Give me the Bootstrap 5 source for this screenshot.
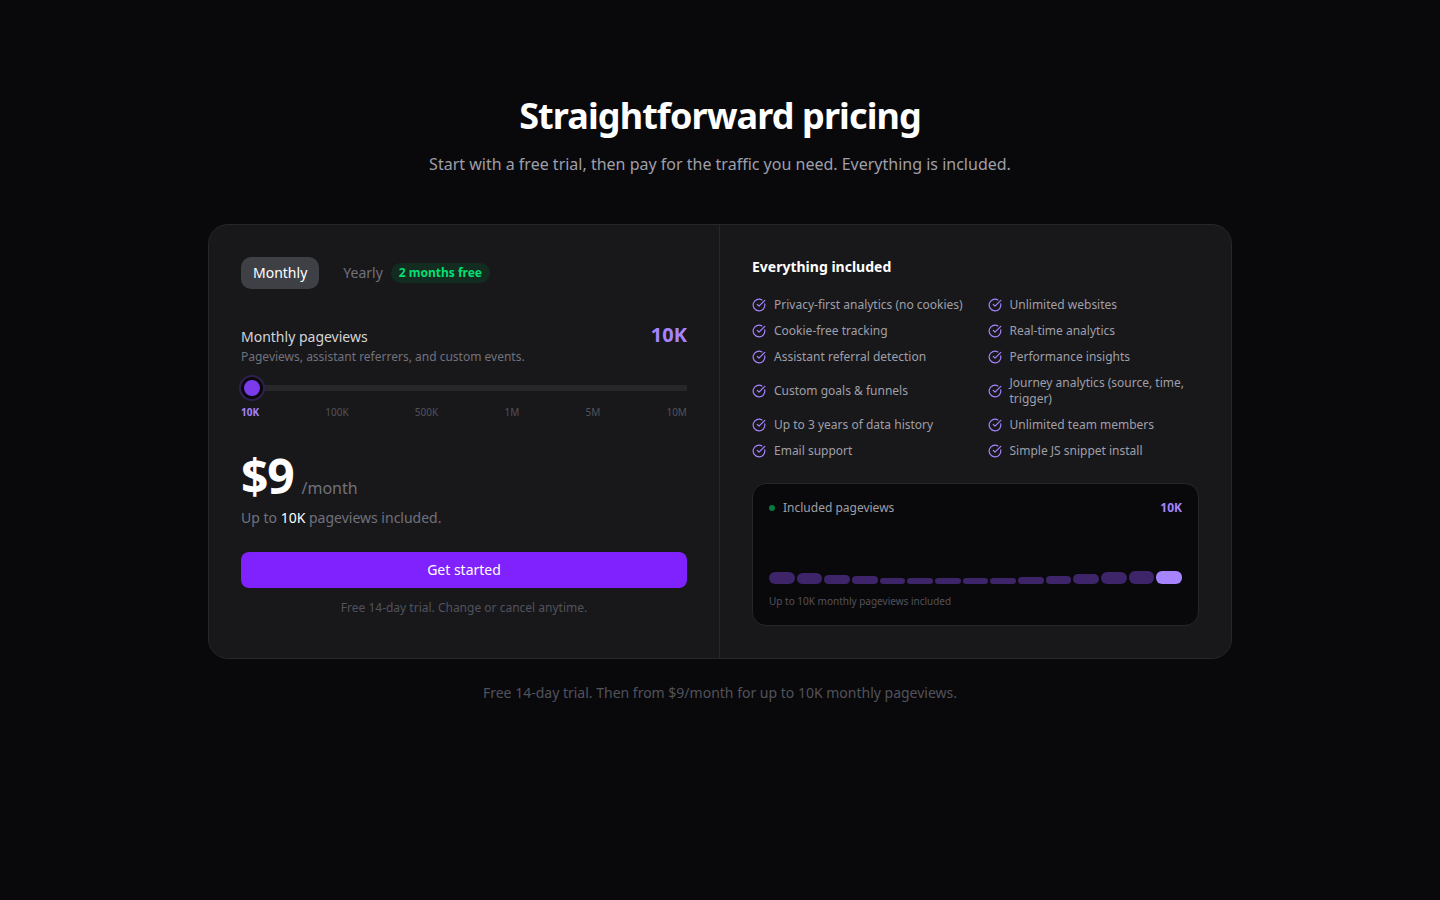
<!DOCTYPE html>
<html lang="en" data-bs-theme="dark">
<head>
<meta charset="utf-8">
<meta name="viewport" content="width=device-width, initial-scale=1">
<title>Straightforward pricing</title>
<link href="https://cdn.jsdelivr.net/npm/bootstrap@5.3.0/dist/css/bootstrap.min.css" rel="stylesheet">
<style>
  body { background: #09090b; color: #9f9fa9; font-family: "Noto Sans", sans-serif; font-size: 14px; line-height: 20px; }
  .pricing { padding: 96px 24px; }
  .pricing-title { font-size: 36px; line-height: 40px; font-weight: 700; color: #fff; letter-spacing: -0.025em; }
  .pricing-lead { font-size: 16px; line-height: 24px; }
  .plan { max-width: 1024px; background: #18181b; border: 1px solid #27272a; border-radius: 20px; overflow: hidden; }
  .pane { padding: 32px; }
  @media (min-width: 768px) { .pane-left { border-right: 1px solid #27272a; } }
  .periods { gap: 12px; }
  .period { border: 0; border-radius: 10px; background: transparent; color: #71717b; padding: 6px 12px; font-size: 14px; line-height: 20px; }
  .period.active { background: #3f3f46; color: #fff; }
  .saving { background: #132c20; color: #05df72; border-radius: 10px; padding: 2px 8px; font-size: 12px; line-height: 16px; font-weight: 700; }
  .text-note { font-size: 12px; line-height: 16px; }
  .text-tiny { font-size: 10px; line-height: 15px; }
  .ink-light { color: #d4d4d8; }
  .ink-mid { color: #71717b; }
  .ink-dim { color: #52525c; }
  .ink-violet { color: #a684ff; }
  .volume-head { margin-top: 32px; }
  .amount { font-size: 20px; line-height: 28px; font-weight: 700; }
  .volume { appearance: none; display: block; width: 100%; height: 22px; margin: 12px 0 6px; background: linear-gradient(#27272a, #27272a) center / 100% 6px no-repeat; }
  .volume::-webkit-slider-thumb { appearance: none; width: 22px; height: 22px; border: 3px solid #09090b; border-radius: 50%; background: #7c3aed; box-shadow: 0 0 0 2px #2f2050; }
  .volume::-moz-range-thumb { width: 16px; height: 16px; border: 3px solid #09090b; border-radius: 50%; background: #7c3aed; box-shadow: 0 0 0 2px #2f2050; }
  .price-row { margin-top: 32px; }
  .price { font-size: 48px; line-height: 48px; font-weight: 700; color: #fff; letter-spacing: -0.025em; }
  .per { font-size: 16px; line-height: 24px; }
  .btn-start { background: #7f22fe; color: #fff; border: 0; border-radius: 8px; padding: 8px 16px; font-size: 14px; line-height: 20px; }
  .btn-start:hover { background: #8e51ff; color: #fff; }
  .start-note { margin-top: 12px; }
  .pane-title { font-size: 14px; line-height: 20px; font-weight: 700; color: #fff; margin-bottom: 20px; }
  .features { display: grid; grid-template-columns: 1fr 1fr; gap: 10px 24px; margin-bottom: 24px; }
  .tick { width: 14px; height: 14px; flex: none; fill: none; stroke: #a684ff; stroke-width: 2; stroke-linecap: round; stroke-linejoin: round; }
  .usage { background: #09090b; border: 1px solid #27272a; border-radius: 14px; padding: 16px; }
  .dot { width: 6px; height: 6px; border-radius: 50%; background: #067a43; }
  .bars { height: 56px; gap: 2px; margin: 12px 0 10px; }
  .bars span { flex: 1; border-radius: 6px; background: #3e2469; }
  .bars span:last-child { background: #a684ff; }
</style>
</head>
<body>
<main class="pricing">
  <header class="text-center mb-5">
    <h1 class="pricing-title mb-3">Straightforward pricing</h1>
    <p class="pricing-lead mb-0">Start with a free trial, then pay for the traffic you need. Everything is included.</p>
  </header>

  <div class="plan mx-auto">
    <div class="row g-0">
      <section class="col-md-6 pane pane-left">
        <div class="periods d-flex align-items-center">
          <button type="button" class="period active">Monthly</button>
          <button type="button" class="period d-flex align-items-center gap-2">Yearly <span class="saving">2 months free</span></button>
        </div>

        <div class="volume-head d-flex justify-content-between align-items-baseline">
          <label for="volume" class="ink-light">Monthly pageviews</label>
          <output for="volume" class="amount ink-violet">10K</output>
        </div>
        <p class="text-note ink-mid mb-0">Pageviews, assistant referrers, and custom events.</p>
        <input id="volume" class="volume" type="range" min="0" max="5" step="1" value="0">
        <div class="d-flex justify-content-between text-tiny ink-dim">
          <span class="fw-bold ink-violet">10K</span><span>100K</span><span>500K</span><span>1M</span><span>5M</span><span>10M</span>
        </div>

        <div class="price-row d-flex align-items-baseline gap-2">
          <span class="price">$9</span><span class="per ink-mid">/month</span>
        </div>
        <p class="ink-mid mt-2 mb-4">Up to <span class="text-white">10K</span> pageviews included.</p>
        <button type="button" class="btn btn-start w-100">Get started</button>
        <p class="start-note text-note ink-dim text-center mb-0">Free 14-day trial. Change or cancel anytime.</p>
      </section>

      <section class="col-md-6 pane">
        <h2 class="pane-title">Everything included</h2>
        <ul class="features list-unstyled text-note">
          <li class="d-flex align-items-center gap-2"><svg class="tick" viewBox="0 0 24 24" aria-hidden="true"><use href="#tick"/></svg>Privacy-first analytics (no cookies)</li>
          <li class="d-flex align-items-center gap-2"><svg class="tick" viewBox="0 0 24 24" aria-hidden="true"><use href="#tick"/></svg>Unlimited websites</li>
          <li class="d-flex align-items-center gap-2"><svg class="tick" viewBox="0 0 24 24" aria-hidden="true"><use href="#tick"/></svg>Cookie-free tracking</li>
          <li class="d-flex align-items-center gap-2"><svg class="tick" viewBox="0 0 24 24" aria-hidden="true"><use href="#tick"/></svg>Real-time analytics</li>
          <li class="d-flex align-items-center gap-2"><svg class="tick" viewBox="0 0 24 24" aria-hidden="true"><use href="#tick"/></svg>Assistant referral detection</li>
          <li class="d-flex align-items-center gap-2"><svg class="tick" viewBox="0 0 24 24" aria-hidden="true"><use href="#tick"/></svg>Performance insights</li>
          <li class="d-flex align-items-center gap-2"><svg class="tick" viewBox="0 0 24 24" aria-hidden="true"><use href="#tick"/></svg>Custom goals &amp; funnels</li>
          <li class="d-flex align-items-center gap-2"><svg class="tick" viewBox="0 0 24 24" aria-hidden="true"><use href="#tick"/></svg>Journey analytics (source, time, trigger)</li>
          <li class="d-flex align-items-center gap-2"><svg class="tick" viewBox="0 0 24 24" aria-hidden="true"><use href="#tick"/></svg>Up to 3 years of data history</li>
          <li class="d-flex align-items-center gap-2"><svg class="tick" viewBox="0 0 24 24" aria-hidden="true"><use href="#tick"/></svg>Unlimited team members</li>
          <li class="d-flex align-items-center gap-2"><svg class="tick" viewBox="0 0 24 24" aria-hidden="true"><use href="#tick"/></svg>Email support</li>
          <li class="d-flex align-items-center gap-2"><svg class="tick" viewBox="0 0 24 24" aria-hidden="true"><use href="#tick"/></svg>Simple JS snippet install</li>
        </ul>

        <div class="usage">
          <div class="d-flex align-items-center gap-2 text-note">
            <span class="dot"></span><span>Included pageviews</span><span class="ms-auto fw-bold ink-violet">10K</span>
          </div>
          <div class="bars d-flex align-items-end">
            <span style="height:12px"></span><span style="height:11px"></span><span style="height:9px"></span><span style="height:8px"></span><span style="height:6px"></span><span style="height:6px"></span><span style="height:6px"></span><span style="height:6px"></span><span style="height:6px"></span><span style="height:7px"></span><span style="height:8px"></span><span style="height:10px"></span><span style="height:12px"></span><span style="height:13px"></span><span style="height:13px"></span>
          </div>
          <p class="text-tiny ink-dim mb-0">Up to 10K monthly pageviews included</p>
        </div>
      </section>
    </div>
  </div>

  <p class="text-center ink-dim mt-4 mb-0">Free 14-day trial. Then from $9/month for up to 10K monthly pageviews.</p>
</main>

<svg class="d-none" aria-hidden="true">
  <symbol id="tick" viewBox="0 0 24 24"><path d="M21.801 10A10 10 0 1 1 17 3.335"/><path d="m9 11 3 3L22 4"/></symbol>
</svg>
<script src="https://cdn.jsdelivr.net/npm/bootstrap@5.3.0/dist/js/bootstrap.bundle.min.js"></script>
</body>
</html>
